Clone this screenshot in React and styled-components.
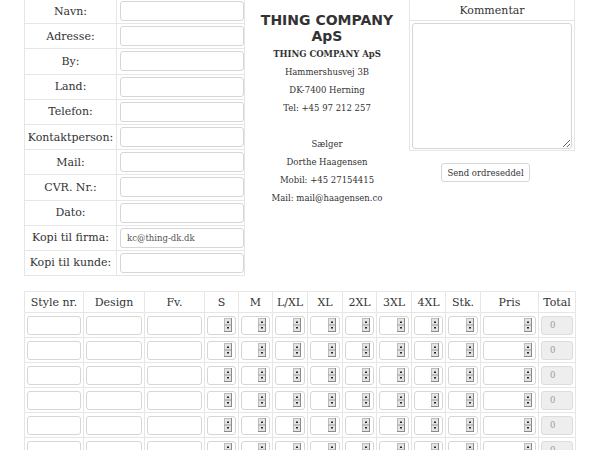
import React from 'react'
import styled, { createGlobalStyle } from 'styled-components'

const Global = createGlobalStyle`
html, body {
    margin:0;
    padding:0;
    overflow:hidden;
    background:#fff;
}
body, table, td, th {
    font-family:"DejaVu Serif", "Liberation Serif", serif;
    color:#333;
}
`

const fields = ['Navn:', 'Adresse:', 'By:', 'Land:', 'Telefon:', 'Kontaktperson:', 'Mail:', 'CVR. Nr.:', 'Dato:', 'Kopi til firma:', 'Kopi til kunde:']

const columns = [
    { name: 'Style nr.', w: 59, kind: 'text' },
    { name: 'Design', w: 61, kind: 'text' },
    { name: 'Fv.', w: 60, kind: 'text' },
    { name: 'S', w: 34, kind: 'num' },
    { name: 'M', w: 34, kind: 'num' },
    { name: 'L/XL', w: 35, kind: 'num' },
    { name: 'XL', w: 35, kind: 'num' },
    { name: '2XL', w: 34, kind: 'num' },
    { name: '3XL', w: 35, kind: 'num' },
    { name: '4XL', w: 34, kind: 'num' },
    { name: 'Stk.', w: 35, kind: 'num' },
    { name: 'Pris', w: 58, kind: 'num' },
    { name: 'Total', w: 37, kind: 'total' },
]

const Spin = () => (
    <SpinBox>
        <svg width="8" height="14" viewBox="0 0 8 14">
            <rect x="0.5" y="0.5" width="7" height="13" fill="#e4e4e4" stroke="#bdbdbd" />
            <line x1="7.5" y1="0" x2="7.5" y2="14" stroke="#8a8a8a" />
            <line x1="0" y1="13.5" x2="8" y2="13.5" stroke="#8a8a8a" />
            <line x1="0.5" y1="7" x2="7.5" y2="7" stroke="#9a9a9a" />
            <path d="M3 4h2v1H3zM3.5 3h1v1h-1z" fill="#222" />
            <path d="M3 9h2v1H3zM3.5 10h1v1h-1z" fill="#222" />
        </svg>
    </SpinBox>
)

const NumberField = () => (
    <NumBox>
        <NumInput type="text" />
        <Spin />
    </NumBox>
)

export default () => {
    const rows = Array.from({ length: 8 })
    return (
        <Page>
            <Global />
            <Top>
                <FormTable>
                    <tbody>
                        {fields.map((f) => (
                            <tr key={f}>
                                <LabelCell>{f}</LabelCell>
                                <FieldCell>
                                    <TextInput defaultValue={f === 'Kopi til firma:' ? 'kc@thing-dk.dk' : ''} />
                                </FieldCell>
                            </tr>
                        ))}
                    </tbody>
                </FormTable>
                <Info>
                    <Title>THING COMPANY<br />ApS</Title>
                    <Lines>
                        <strong>THING COMPANY ApS</strong>
                        <span>Hammershusvej 3B</span>
                        <span>DK-7400 Herning</span>
                        <span>Tel: +45 97 212 257</span>
                        <span>&nbsp;</span>
                        <span>Sælger</span>
                        <span>Dorthe Haagensen</span>
                        <span>Mobil: +45 27154415</span>
                        <span>Mail: mail@haagensen.co</span>
                    </Lines>
                </Info>
                <Side>
                    <CommentTable>
                        <tbody>
                            <tr><CommentHead>Kommentar</CommentHead></tr>
                            <tr><CommentCell><Comment /></CommentCell></tr>
                        </tbody>
                    </CommentTable>
                    <SendButton>Send ordreseddel</SendButton>
                </Side>
            </Top>
            <OrderTable>
                <colgroup>
                    {columns.map((c) => <col key={c.name} style={{ width: c.w }} />)}
                </colgroup>
                <thead>
                    <tr>
                        {columns.map((c) => <HeadCell key={c.name}>{c.name}</HeadCell>)}
                    </tr>
                </thead>
                <tbody>
                    {rows.map((_, i) => (
                        <tr key={i}>
                            {columns.map((c) => (
                                <OrderCell key={c.name}>
                                    {c.kind === 'text' && <CellInput />}
                                    {c.kind === 'num' && <NumberField />}
                                    {c.kind === 'total' && <TotalInput value="0" disabled readOnly />}
                                </OrderCell>
                            ))}
                        </tr>
                    ))}
                </tbody>
            </OrderTable>
        </Page>
    )
}

const Page = styled.div`
padding-left:24px;
margin-top:-2px;
width:551px;
`

const Top = styled.div`
display:flex;
align-items:flex-start;
`

const FormTable = styled.table`
border-collapse:collapse;
width:221px;
table-layout:fixed;
td{
    border:1px solid #e6e6e6;
    height:24px;
    padding:0;
}
tr{
    height:25.2px;
}
`

const LabelCell = styled.td`
width:91px;
text-align:center;
font-family:"DejaVu Serif", serif;
font-size:11px;
vertical-align:middle;
white-space:nowrap;
`

const FieldCell = styled.td`
padding:0 2px !important;
`

const TextInput = styled.input`
display:block;
box-sizing:border-box;
width:124px;
height:20px;
margin:0 0 0 1px;
border:1px solid #d6d6d6;
border-radius:3px;
padding:0 6px;
font-family:"DejaVu Serif", serif;
font-size:8.5px;
color:#555;
outline:none;
`

const Info = styled.div`
flex:1;
display:flex;
flex-direction:column;
align-items:center;
`

const Title = styled.h1`
margin:14px 0 0;
text-align:center;
font-family:"DejaVu Sans", sans-serif;
font-weight:bold;
font-size:14px;
line-height:16px;
color:#333;
`

const Lines = styled.div`
display:flex;
flex-direction:column;
align-items:center;
margin-top:1px;
font-family:"DejaVu Serif", serif;
font-size:8.5px;
line-height:18px;
color:#333;
strong{
    font-weight:bold;
}
`

const Side = styled.div`
width:166px;
display:flex;
flex-direction:column;
align-items:flex-start;
`

const CommentTable = styled.table`
border-collapse:collapse;
width:166px;
margin-top:1px;
`

const CommentHead = styled.td`
border:1px solid #e6e6e6;
text-align:center;
font-family:"DejaVu Serif", serif;
font-size:11px;
height:20px;
padding:0;
`

const CommentCell = styled.td`
border:1px solid #e6e6e6;
padding:2px 2px 1px;
`

const Comment = styled.textarea`
display:block;
box-sizing:border-box;
width:160px;
height:126px;
margin:0;
border:1px solid #d6d6d6;
border-radius:3px;
outline:none;
`

const SendButton = styled.button`
margin:12px 0 0 32px;
width:89px;
height:19px;
padding:0;
background:#fff;
border:1px solid #d6d6d6;
border-radius:3px;
font-family:"DejaVu Serif", serif;
font-size:8.5px;
color:#333;
`

const OrderTable = styled.table`
margin-top:15px;
border-collapse:collapse;
table-layout:fixed;
width:551px;
`

const HeadCell = styled.th`
border:1px solid #e6e6e6;
font-family:"DejaVu Serif", serif;
font-weight:normal;
font-size:11px;
height:20px;
padding:0;
text-align:center;
color:#333;
`

const OrderCell = styled.td`
border:1px solid #e6e6e6;
height:24px;
padding:0 2px;
`

const CellInput = styled.input`
display:block;
box-sizing:border-box;
width:100%;
height:19px;
margin:0;
border:1px solid #d6d6d6;
border-radius:3px;
outline:none;
`

const NumBox = styled.div`
display:flex;
align-items:center;
box-sizing:border-box;
height:19px;
border:1px solid #d6d6d6;
border-radius:3px;
padding-right:3px;
background:#fff;
`

const NumInput = styled.input`
flex:1;
min-width:0;
border:none;
outline:none;
background:transparent;
padding:0;
`

const SpinBox = styled.span`
display:flex;
flex:none;
`

const TotalInput = styled.input`
display:block;
box-sizing:border-box;
width:100%;
height:19px;
margin:0;
border:1px solid #dcdcdc;
border-radius:3px;
background:#eee;
padding:0 8px;
font-family:"DejaVu Serif", serif;
font-size:8.5px;
color:#999;
outline:none;
`
